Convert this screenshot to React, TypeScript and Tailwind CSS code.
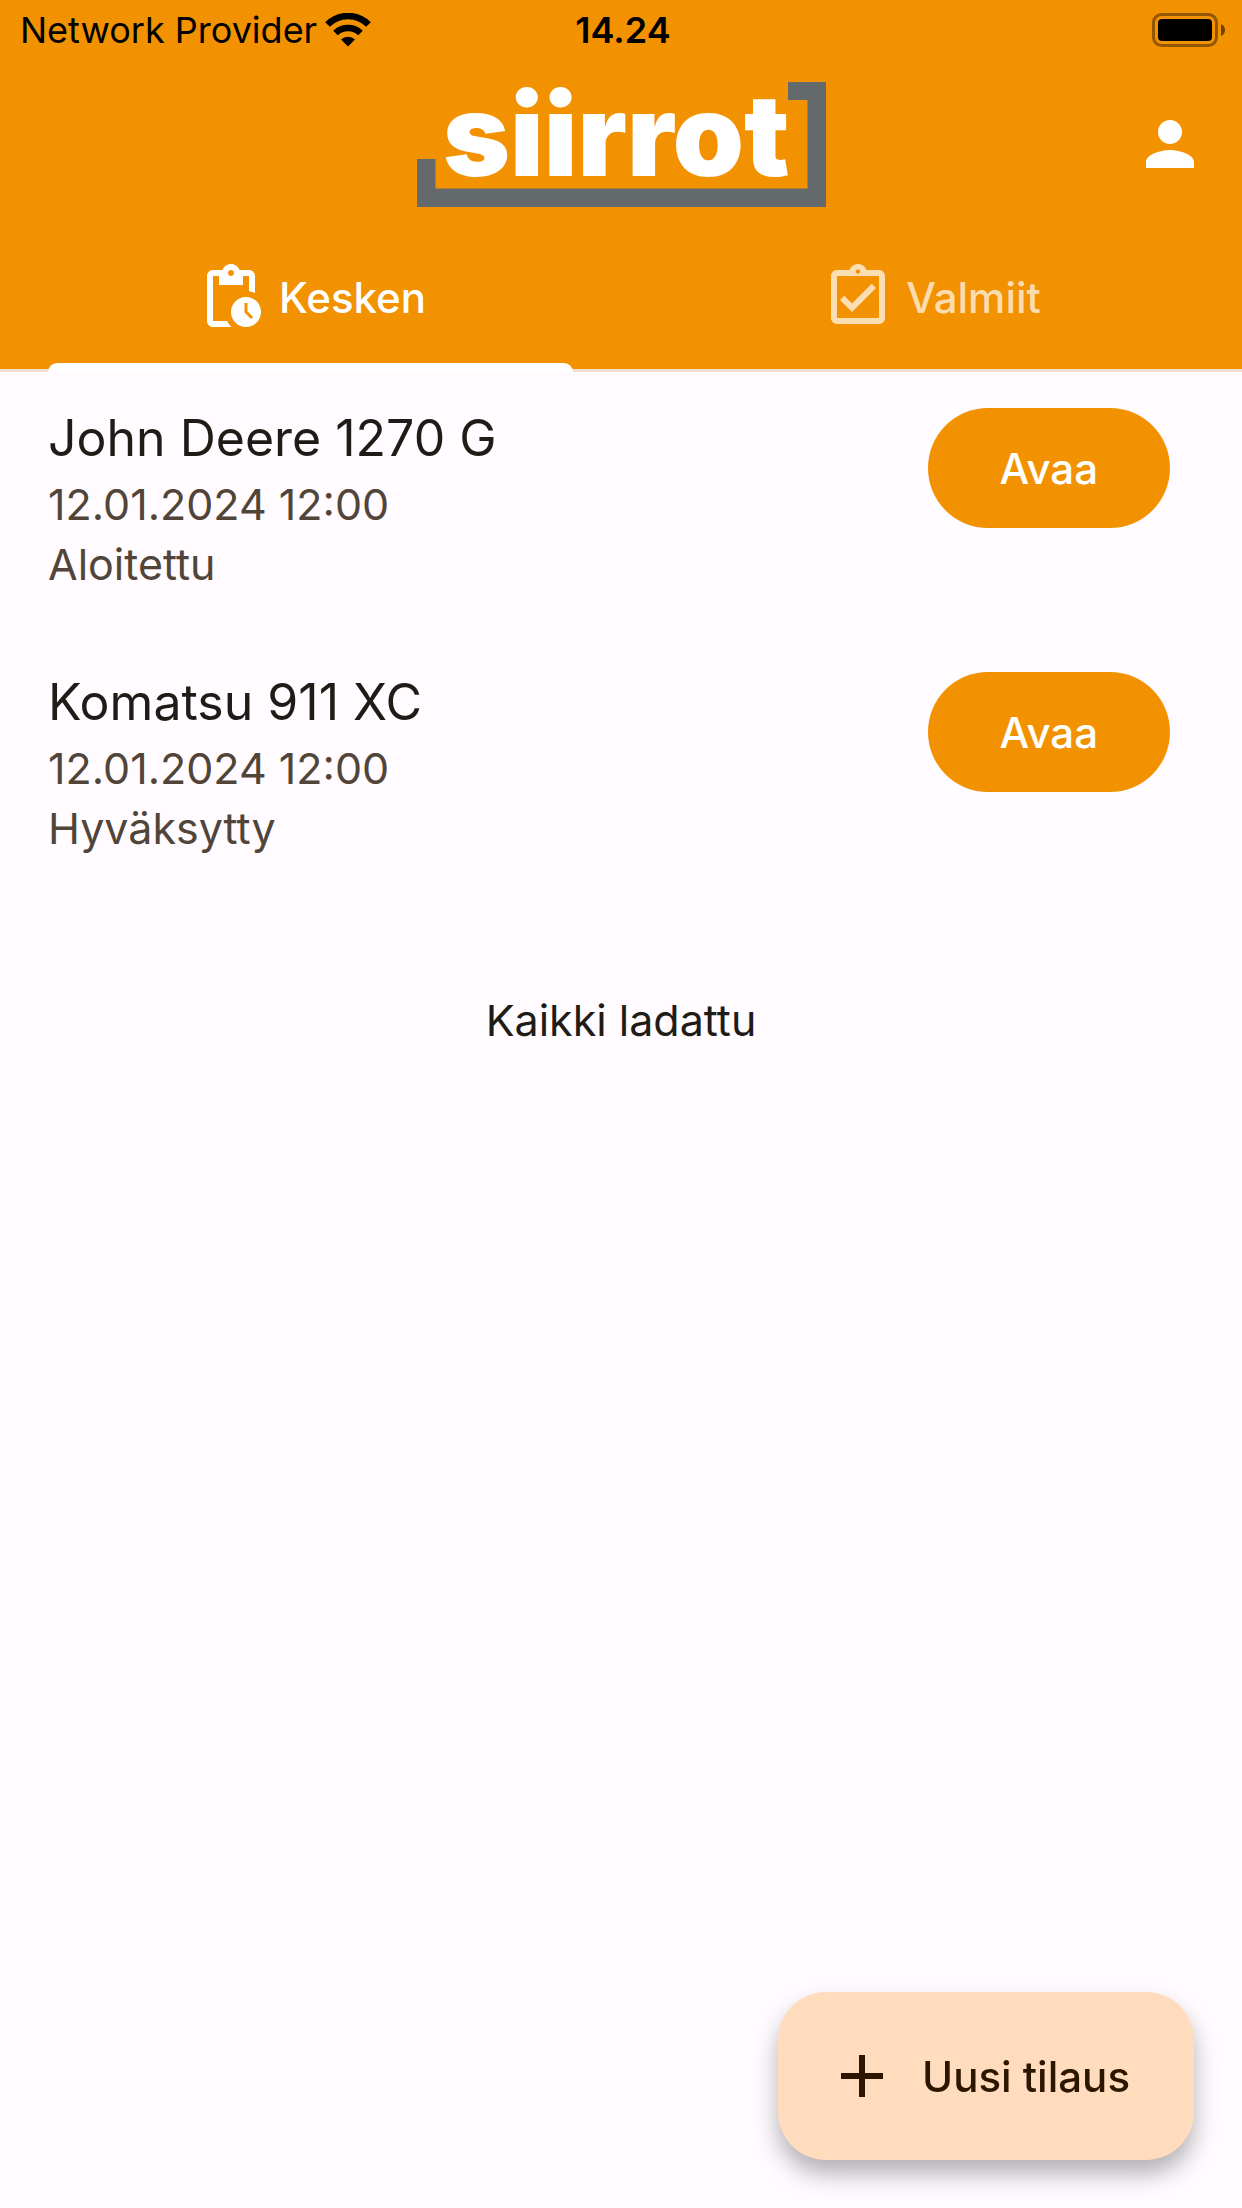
import {useState} from "react";
import {MdAdd, MdOutlineAssignmentTurnedIn, MdPendingActions, MdPerson} from "react-icons/md";
import {clsx} from "clsx";

type Order = {
    id: number;
    machine: string;
    date: string;
    status: string;
};

const orders: Order[] = [
    {id: 1, machine: "John Deere 1270 G", date: "12.01.2024 12:00", status: "Aloitettu"},
    {id: 2, machine: "Komatsu 911 XC", date: "12.01.2024 12:00", status: "Hyväksytty"},
];

const tabs = [
    {id: "open", label: "Kesken", Icon: MdPendingActions},
    {id: "done", label: "Valmiit", Icon: MdOutlineAssignmentTurnedIn},
];

const WifiIcon = () => (
    <svg className="w-[46px] h-[34px]" viewBox="0 0 46 34" fill="none" stroke="black" aria-hidden="true">
        <path d="M2.5 11.5A29 29 0 0 1 43.5 11.5" strokeWidth="6.5"/>
        <path d="M10.5 20A18 18 0 0 1 35.5 20" strokeWidth="6.5"/>
        <path d="M16 26.5A10 10 0 0 1 30 26.5L23 33.5Z" fill="black" stroke="none"/>
    </svg>
);

const BatteryIcon = () => (
    <svg className="w-[74px] h-[34px]" viewBox="0 0 74 34" aria-hidden="true">
        <rect x="1.5" y="1.5" width="63" height="31" rx="8" fill="none" stroke="black" strokeOpacity="0.4" strokeWidth="3"/>
        <rect x="6" y="6" width="54" height="22" rx="4" fill="black"/>
        <path d="M69 11Q73 13 73 17Q73 21 69 23Z" fill="black" fillOpacity="0.55"/>
    </svg>
);

const Logo = () => (
    <svg className="w-[409px] h-[125px] overflow-visible" viewBox="0 0 409 125" role="img" aria-label="siirrot">
        <path d="M0 77H18.5V106.5H390.5V18H371V0H409V125H0Z" fill="#646a6c"/>
        <text x="26" y="94" fill="white" className="font-['Inter'] font-black text-[114px]">siirrot</text>
    </svg>
);

const StatusBar = () => (
    <div className="grid grid-cols-3 items-center h-15 pl-5 pr-4 text-[36px] leading-15 text-black">
        <div className="flex items-center gap-2 whitespace-nowrap">
            <span>Network Provider</span>
            <WifiIcon/>
        </div>
        <span className="text-center font-semibold">14.24</span>
        <div className="flex justify-end">
            <BatteryIcon/>
        </div>
    </div>
);

const OrderRow = ({order}: { order: Order }) => (
    <li className="flex items-start justify-between pt-[30px] pb-[42px] pl-12 pr-18">
        <div className="text-[43px] leading-15 text-[#51453a]">
            <h2 className="text-[50px] leading-18 text-[#1f1b16]">{order.machine}</h2>
            <p>{order.date}</p>
            <p>{order.status}</p>
        </div>
        <button
            type="button"
            className="mt-1.5 h-30 px-18 rounded-full bg-[#f39200] text-[42px] font-medium text-white cursor-pointer">
            Avaa
        </button>
    </li>
);

const App = () => {
    const [active, setActive] = useState("open");

    return (
        <div className="min-h-screen bg-[#fffbff] font-['Inter',sans-serif]">
            <header className="bg-[#f39200]">
                <StatusBar/>
                <div className="grid grid-cols-3 items-center h-42 px-9">
                    <div className="col-start-2 flex justify-center">
                        <Logo/>
                    </div>
                    <button type="button" aria-label="Profiili" className="justify-self-end cursor-pointer">
                        <MdPerson className="size-18 text-white"/>
                    </button>
                </div>
                <div role="tablist" className="grid grid-cols-2">
                    {tabs.map(({id, label, Icon}) => (
                        <button
                            key={id}
                            type="button"
                            role="tab"
                            aria-selected={active === id}
                            onClick={() => setActive(id)}
                            className={clsx("relative flex items-center justify-center gap-3 h-36 pb-[3px] border-b-[3px] border-[#f2dfd1] text-[42px] font-medium cursor-pointer",
                                active === id ? "text-white" : "text-white/70")}>
                            <Icon className="size-18"/>
                            <span>{label}</span>
                            {active === id && (
                                <span className="absolute inset-x-12 -bottom-[3px] h-[9px] rounded-t-[9px] bg-white"/>
                            )}
                        </button>
                    ))}
                </div>
            </header>

            <main>
                <ul>
                    {orders.map((order) => <OrderRow key={order.id} order={order}/>)}
                </ul>
                <p className="pt-[90px] text-center text-[43px] leading-15 text-[#1f1b16]">Kaikki ladattu</p>
            </main>

            <button
                type="button"
                className="fixed right-12 bottom-12 flex items-center gap-6 h-42 pl-12 pr-16 rounded-[48px] bg-[#ffdcbd] text-[42px] font-medium text-[#2c1600] shadow-[0_14px_24px_rgba(0,0,0,0.3)] cursor-pointer">
                <MdAdd className="size-18"/>
                Uusi tilaus
            </button>
        </div>
    );
};

export default App;
